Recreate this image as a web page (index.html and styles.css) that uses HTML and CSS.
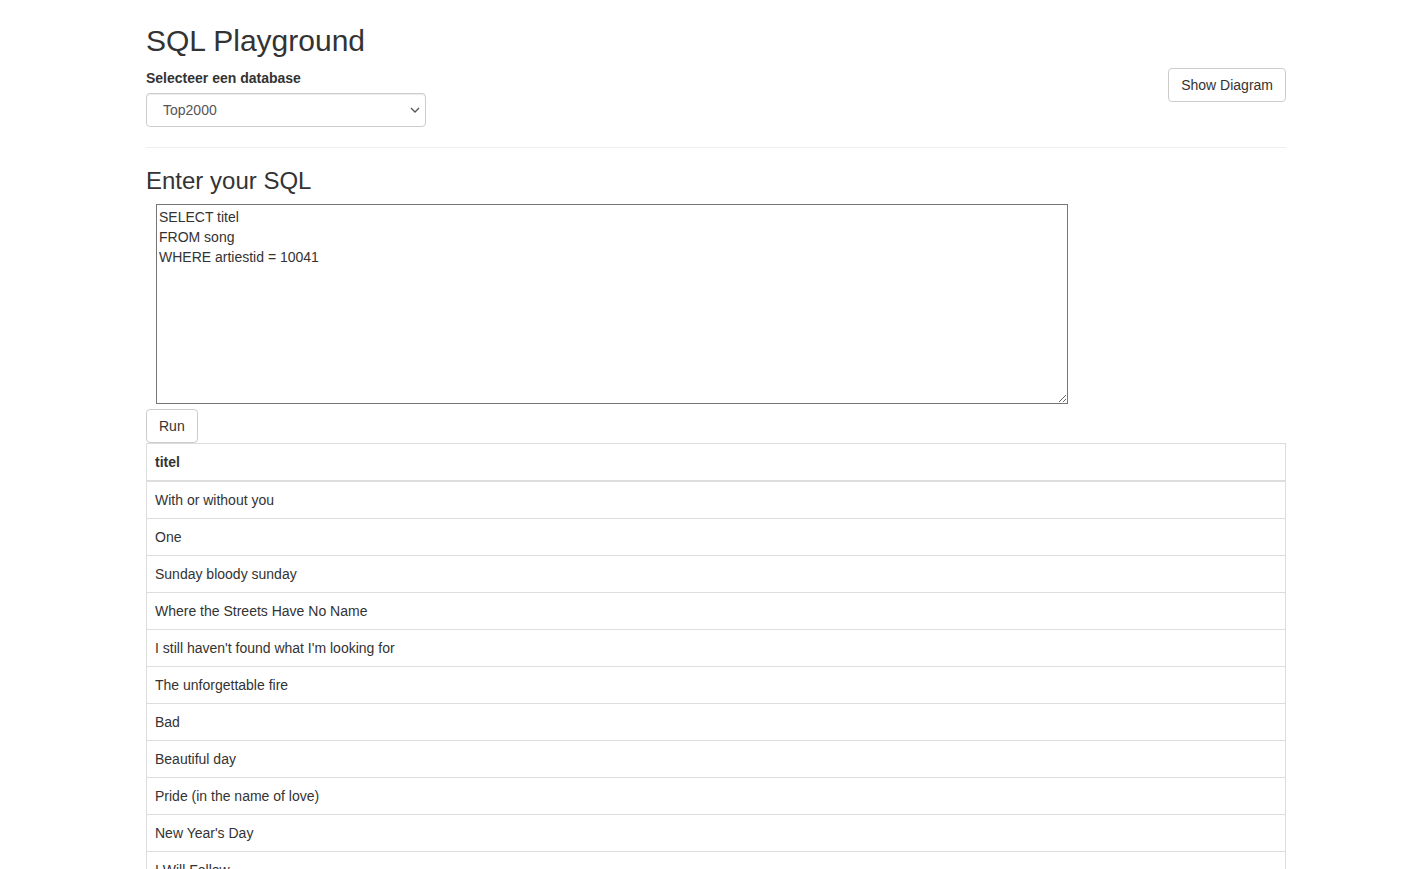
FILE: index.html
```html
<!DOCTYPE html>
<html>
<head>
<meta charset="utf-8">
<title>SQL Playground</title>
<link rel="stylesheet" href="styles.css">
</head>
<body>
<div class="container">
  <div class="header">
    <div class="header-left">
      <h2 class="title">SQL Playground</h2>
      <label class="db-label" for="db">Selecteer een database</label>
      <div class="select-wrap">
        <select id="db" class="db-select">
          <option>Top2000</option>
        </select>
        <svg class="chevron" width="10" height="6" viewBox="0 0 10 6"><path d="M1 1 L5 5 L9 1" fill="none" stroke="#555" stroke-width="1.3"/></svg>
      </div>
    </div>
    <button class="btn btn-diagram">Show Diagram</button>
  </div>
  <hr class="divider">
  <h3 class="subtitle">Enter your SQL</h3>
  <textarea class="sql">SELECT titel
FROM song
WHERE artiestid = 10041</textarea>
  <div class="run-row"><button class="btn">Run</button></div>
  <table class="results">
    <thead><tr><th>titel</th></tr></thead>
    <tbody>
      <tr><td>With or without you</td></tr>
      <tr><td>One</td></tr>
      <tr><td>Sunday bloody sunday</td></tr>
      <tr><td>Where the Streets Have No Name</td></tr>
      <tr><td>I still haven't found what I'm looking for</td></tr>
      <tr><td>The unforgettable fire</td></tr>
      <tr><td>Bad</td></tr>
      <tr><td>Beautiful day</td></tr>
      <tr><td>Pride (in the name of love)</td></tr>
      <tr><td>New Year's Day</td></tr>
      <tr><td>I Will Follow</td></tr>
      <tr><td>Vertigo</td></tr>
    </tbody>
  </table>
</div>
</body>
</html>
```
FILE: styles.css
```css
* { box-sizing: border-box; }
html, body { margin: 0; }
body {
  padding-left: 6px;
  font-family: "Liberation Sans", Arial, Helvetica, sans-serif;
  font-size: 14px;
  line-height: 20px;
  color: #333;
  background: #fff;
}
.container {
  width: 1140px;
  margin: 0 auto;
}
.header {
  display: flex;
  justify-content: space-between;
  align-items: flex-start;
}
.header-left {
  display: flex;
  flex-direction: column;
  align-items: flex-start;
}
.title {
  margin: 24px 0 0;
  font-size: 30px;
  font-weight: 500;
  line-height: 33px;
}
.db-label {
  margin-top: 11px;
  margin-bottom: 5px;
  font-weight: bold;
  display: block;
}
.select-wrap {
  position: relative;
  width: 280px;
}
.db-select {
  appearance: none;
  -webkit-appearance: none;
  width: 280px;
  height: 34px;
  padding: 6px 12px 6px 16px;
  border: 1px solid #ccc;
  border-radius: 4px;
  background: #fff;
  color: #555;
  font-family: inherit;
  font-size: 14px;
  box-shadow: inset 0 1px 1px rgba(0,0,0,.075);
}
.chevron {
  position: absolute;
  right: 6px;
  top: 14px;
  pointer-events: none;
}
.btn {
  display: inline-block;
  height: 34px;
  padding: 6px 12px;
  font-family: inherit;
  font-size: 14px;
  line-height: 20px;
  color: #333;
  background: #fff;
  border: 1px solid #ccc;
  border-radius: 4px;
  cursor: pointer;
}
.btn-diagram {
  margin-top: 68px;
}
.divider {
  margin: 20px 0;
  border: 0;
  border-top: 1px solid #eee;
  height: 0;
}
.subtitle {
  margin: 0 0 10px;
  font-size: 24px;
  font-weight: 500;
  line-height: 26px;
}
.sql {
  display: block;
  margin: 0 0 0 10px;
  width: 912px;
  height: 200px;
  padding: 2px;
  border: 1px solid #767676;
  font-family: inherit;
  font-size: 14px;
  line-height: 20px;
  color: #333;
  resize: both;
}
.run-row {
  margin-top: 5px;
  line-height: 0;
}
.results {
  width: 100%;
  border-collapse: collapse;
  border: 1px solid #ddd;
}
.results th, .results td {
  padding: 8px;
  text-align: left;
  border: 1px solid #ddd;
  line-height: 20px;
}
.results th {
  border-bottom: 2px solid #ddd;
  font-weight: bold;
}
```
